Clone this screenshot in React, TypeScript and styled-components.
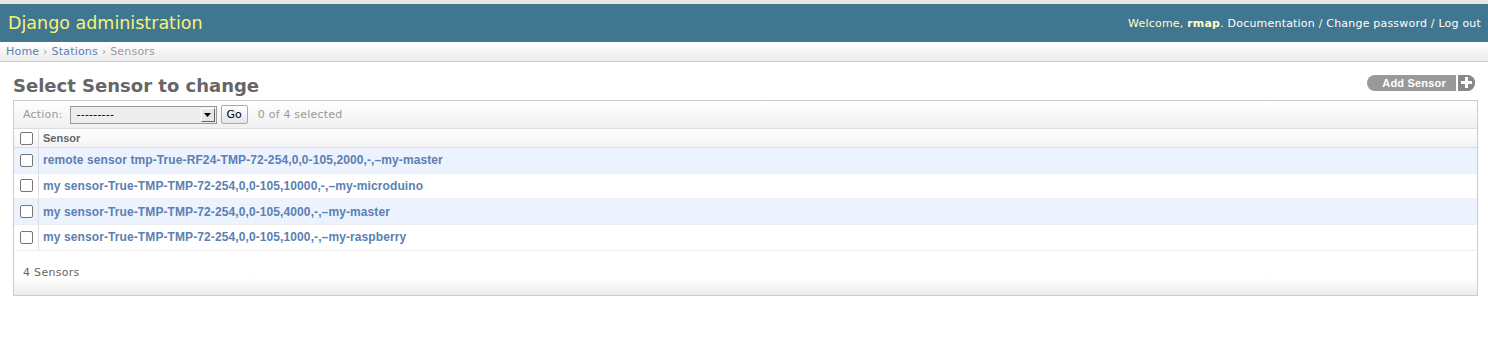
import React from "react";
import styled, { createGlobalStyle } from "styled-components";

const Global = createGlobalStyle`
  html, body { margin: 0; padding: 0; background: #fff; }
  body { font-family: "DejaVu Sans", "Lucida Grande", Verdana, sans-serif; font-size: 12px; color: #333; }
  a { text-decoration: none; color: #5b80b2; }
`;

const TopStrip = styled.div`
  height: 4px;
  background: #e8e6e3;
`;

const Header = styled.header`
  height: 38px;
  background: #417690;
  display: flex;
  align-items: center;
  justify-content: space-between;
  padding: 0 7px 0 8px;
`;

const Brand = styled.h1`
  margin: 0;
  font-size: 17.5px;
  font-weight: normal;
  color: #f4f379;
`;

const UserTools = styled.div`
  font-size: 11px;
  color: #ffc;
  letter-spacing: 0.2px;
  a { color: #fff; }
  strong { color: #ffc; font-weight: bold; }
`;

const Crumbs = styled.div`
  height: 19px;
  display: flex;
  align-items: center;
  padding: 0 6px;
  font-size: 11px;
  color: #999;
  background: linear-gradient(#fff, #ececec);
  border-bottom: 1px solid #ccc;
  letter-spacing: 0.2px;
`;

const Sep = styled.span`
  margin: 0 4px;
  font-size: 10px;
  color: #999;
`;

const Content = styled.div`
  padding: 10px 11px 0 13px;
`;

const TitleRow = styled.div`
  display: flex;
  justify-content: space-between;
  align-items: center;
  height: 26px;
  margin-bottom: 2px;
`;

const Title = styled.h1`
  margin: 0;
  font-size: 18px;
  font-weight: bold;
  color: #666;
`;

const AddButton = styled.a`
  display: flex;
  align-items: stretch;
  height: 16px;
  margin-top: -5px;
  margin-right: 2px;
  border-radius: 8px;
  overflow: hidden;
  background: #999;
  color: #fff;
  font-family: "Liberation Sans", Arial, sans-serif;
  font-weight: bold;
  font-size: 11px;
`;

const AddLabel = styled.span`
  display: flex;
  align-items: center;
  padding: 0 10px 0 15px;
  letter-spacing: 0.2px;
`;

const AddPlus = styled.span`
  display: flex;
  align-items: center;
  justify-content: center;
  width: 17px;
  border-left: 2px solid #fff;
  background: #888;
`;

const Module = styled.div`
  border: 1px solid #ccc;
  width: 1463px;
`;

const Actions = styled.div`
  height: 27px;
  display: flex;
  align-items: center;
  padding: 0 9px;
  font-size: 11px;
  color: #999;
  background: linear-gradient(#fff, #f0f0f0);
  border-bottom: 1px solid #ddd;
  letter-spacing: 0.2px;
`;

const Select = styled.div`
  margin-left: 7px;
  width: 147px;
  height: 18px;
  box-sizing: border-box;
  border: 1px solid #999;
  background: #eeedeb;
  display: flex;
  align-items: center;
  justify-content: space-between;
  padding-left: 6px;
  color: #000;
  font-size: 11px;
`;

const SelectArrow = styled.span`
  width: 14px;
  height: 14px;
  margin-right: 1px;
  background: #e8e6e3;
  border: 1px solid #fff;
  border-right-color: #666;
  border-bottom-color: #666;
  box-sizing: border-box;
  display: flex;
  align-items: center;
  justify-content: center;
`;

const GoButton = styled.button`
  margin-left: 4px;
  height: 19px;
  padding: 0 5px;
  font-family: "DejaVu Sans", sans-serif;
  font-size: 11px;
  color: #000;
  background: linear-gradient(#fff, #e6e6e6);
  border: 1px solid #aaa;
  border-radius: 2px;
`;

const Counter = styled.span`
  margin-left: 10px;
`;

const Table = styled.div`
  display: grid;
  grid-template-columns: 25px 1fr;
`;

const HeadCell = styled.div<{ $first?: boolean }>`
  height: 18px;
  display: flex;
  align-items: center;
  padding-left: ${(p) => (p.$first ? "6px" : "4px")};
  border-bottom: 1px solid #ddd;
  border-right: ${(p) => (p.$first ? "1px solid #ddd" : "0")};
  background: linear-gradient(#fff, #f4f4f4);
  font-family: "Liberation Sans", Arial, sans-serif;
  font-weight: bold;
  font-size: 11px;
  color: #666;
`;

const Cell = styled.div<{ $odd: boolean; $first?: boolean }>`
  height: 24.67px;
  display: flex;
  align-items: center;
  padding-left: ${(p) => (p.$first ? "6px" : "4px")};
  background: ${(p) => (p.$odd ? "#edf3fe" : "#fff")};
  border-bottom: 1px solid #eee;
  border-right: ${(p) => (p.$first ? "1px solid #ddd" : "0")};
  a {
    font-family: "Liberation Sans", Arial, sans-serif;
    font-weight: bold;
    font-size: 12px;
    letter-spacing: 0.1px;
    color: #5b80b2;
  }
`;

const Check = styled.span`
  width: 11px;
  height: 11px;
  border: 1px solid #777;
  border-radius: 2px;
  background: #fff;
`;

const Footer = styled.div`
  height: 44px;
  display: flex;
  align-items: center;
  padding-left: 9px;
  font-size: 11px;
  color: #666;
  letter-spacing: 0.3px;
  background: linear-gradient(#fff 60%, #ececec);
`;

const rows = [
  "remote sensor tmp-True-RF24-TMP-72-254,0,0-105,2000,-,–my-master",
  "my sensor-True-TMP-TMP-72-254,0,0-105,10000,-,–my-microduino",
  "my sensor-True-TMP-TMP-72-254,0,0-105,4000,-,–my-master",
  "my sensor-True-TMP-TMP-72-254,0,0-105,1000,-,–my-raspberry",
];

export default function App() {
  return (
    <>
      <Global />
      <TopStrip />
      <Header>
        <Brand>Django administration</Brand>
        <UserTools>
          Welcome, <strong>rmap</strong>. <a href="#">Documentation</a> / <a href="#">Change password</a> /{" "}
          <a href="#">Log out</a>
        </UserTools>
      </Header>
      <Crumbs>
        <a href="#">Home</a>
        <Sep>›</Sep>
        <a href="#">Stations</a>
        <Sep>›</Sep>
        Sensors
      </Crumbs>
      <Content>
        <TitleRow>
          <Title>Select Sensor to change</Title>
          <AddButton href="#">
            <AddLabel>Add Sensor</AddLabel>
            <AddPlus>
              <svg width="11" height="11" viewBox="0 0 11 11">
                <rect x="4" y="0" width="3" height="11" fill="#fff" />
                <rect x="0" y="4" width="11" height="3" fill="#fff" />
              </svg>
            </AddPlus>
          </AddButton>
        </TitleRow>
        <Module>
          <Actions>
            Action:
            <Select>
              ---------
              <SelectArrow>
                <svg width="7" height="4" viewBox="0 0 7 4">
                  <path d="M0 0h7L3.5 4z" fill="#000" />
                </svg>
              </SelectArrow>
            </Select>
            <GoButton>Go</GoButton>
            <Counter>0 of 4 selected</Counter>
          </Actions>
          <Table>
            <HeadCell $first>
              <Check />
            </HeadCell>
            <HeadCell>Sensor</HeadCell>
            {rows.map((r, i) => (
              <React.Fragment key={r}>
                <Cell $odd={i % 2 === 0} $first>
                  <Check />
                </Cell>
                <Cell $odd={i % 2 === 0}>
                  <a href="#">{r}</a>
                </Cell>
              </React.Fragment>
            ))}
          </Table>
          <Footer>4 Sensors</Footer>
        </Module>
      </Content>
    </>
  );
}
